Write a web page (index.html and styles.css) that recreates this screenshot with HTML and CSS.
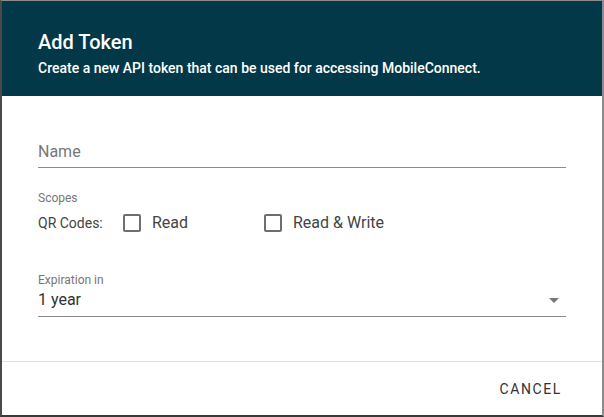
FILE: index.html
```html
<!DOCTYPE html>
<html lang="en">
  <head>
    <meta charset="utf-8" />
    <title>Add Token</title>
    <link rel="stylesheet" href="styles.css">
  </head>
  <body>
    <div class="dialog">
      <div class="dialog-header">
        <h1 class="dialog-title">Add Token</h1>
        <p class="dialog-subtitle">Create a new API token that can be used for accessing MobileConnect.</p>
      </div>
      <div class="dialog-body">
        <div class="field field-name">
          <span class="placeholder">Name</span>
        </div>
        <div class="scopes">
          <div class="small-label">Scopes</div>
          <div class="scope-row">
            <span class="scope-name">QR Codes:</span>
            <label class="check check-read"><span class="box"></span>Read</label>
            <label class="check"><span class="box"></span>Read &amp; Write</label>
          </div>
        </div>
        <div class="field field-select">
          <div class="small-label">Expiration in</div>
          <div class="select-row">
            <span class="value">1 year</span>
            <span class="caret"></span>
          </div>
        </div>
      </div>
      <div class="dialog-footer">
        <button class="btn-text">Cancel</button>
      </div>
    </div>
  </body>
</html>
```
FILE: styles.css
```css
html,
body {
  margin: 0;
  height: 100%;
}

body {
  font-family: Roboto, "Liberation Sans", sans-serif;
  background-color: #fff;
}

.dialog {
  box-sizing: border-box;
  height: 417px;
  display: flex;
  flex-direction: column;
  border-top: 1px solid #8c8c8c;
  border-left: 2px solid #4a4a4a;
  border-right: 2px solid #8c8c8c;
  border-bottom: 2px solid #3a3a3a;
}

.dialog-header {
  background-color: #023848;
  color: #fff;
  height: 95px;
  box-sizing: border-box;
  padding: 28px 0 0 36px;
}

.dialog-title {
  margin: 0;
  font-size: 20px;
  font-weight: 500;
  line-height: 26px;
}

.dialog-subtitle {
  margin: 3px 0 0;
  font-size: 14px;
  font-weight: 500;
  line-height: 20px;
}

.dialog-body {
  flex: 1;
  padding: 0 36px;
}

.field-name {
  margin-top: 42px;
  height: 30px;
  border-bottom: 1px solid #8a8a8a;
  box-sizing: border-box;
}

.placeholder {
  font-size: 16px;
  color: #777;
  line-height: 28px;
}

.scopes {
  margin-top: 22px;
}

.small-label {
  font-size: 12px;
  color: #777;
  line-height: 16px;
}

.scope-row {
  display: flex;
  align-items: center;
  margin-top: 7px;
  font-size: 14px;
  color: #444;
  line-height: 20px;
}

.scope-name {
  width: 85px;
}

.check {
  display: flex;
  align-items: center;
  font-size: 16px;
}

.check-read {
  width: 141px;
}

.box {
  box-sizing: border-box;
  width: 18px;
  height: 18px;
  border: 2px solid #6e6e6e;
  border-radius: 2px;
  margin-right: 11px;
}

.field-select {
  margin-top: 39px;
  border-bottom: 1px solid #8a8a8a;
  padding-bottom: 5px;
}

.select-row {
  display: flex;
  align-items: center;
  justify-content: space-between;
  font-size: 16px;
  color: #333;
  line-height: 22px;
  margin-top: 1px;
}

.caret {
  width: 0;
  height: 0;
  border-left: 5px solid transparent;
  border-right: 5px solid transparent;
  border-top: 5px solid #777;
  margin-right: 7px;
}

.dialog-footer {
  height: 53px;
  border-top: 1px solid #e0e0e0;
  display: flex;
  align-items: center;
  justify-content: flex-end;
  padding-right: 40px;
}

.btn-text {
  background: none;
  border: none;
  padding: 0;
  font-family: inherit;
  font-size: 14px;
  font-weight: 400;
  letter-spacing: 1.6px;
  text-transform: uppercase;
  color: #333;
}
```
